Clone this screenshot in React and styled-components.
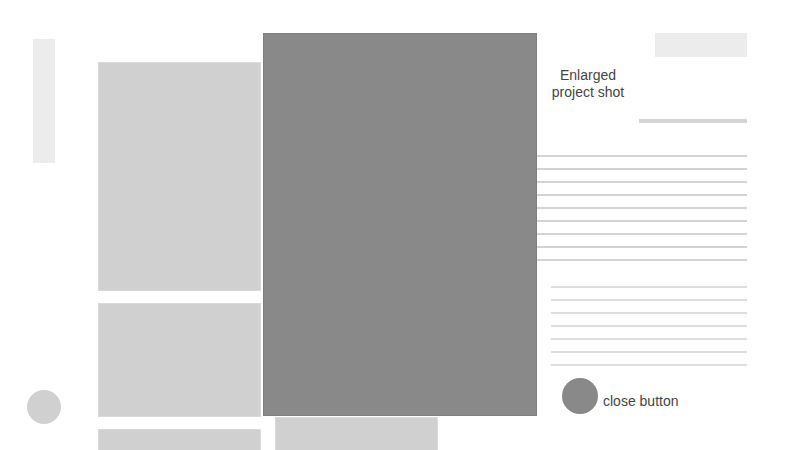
import React from 'react'
import styled, { createGlobalStyle } from 'styled-components'

const GlobalStyle = createGlobalStyle`
html, body {
  margin: 0;
  padding: 0;
  background: #ffffff;
  overflow: hidden;
}
`

const Page = styled.div`
position: relative;
width: 800px;
height: 450px;
display: flex;
overflow: hidden;
font-family: "Liberation Sans", Arial, sans-serif;
`

const Sidebar = styled.div`
width: 98px;
box-sizing: border-box;
padding: 39px 0 26px 27px;
display: flex;
flex-direction: column;
justify-content: space-between;
align-items: flex-start;
`

const SideBar = styled.div`
width: 22px;
height: 124px;
margin-left: 6px;
background: #ececec;
`

const SideDot = styled.div`
width: 34px;
height: 34px;
border-radius: 50%;
background: #d0d0d0;
`

const Grid = styled.div`
padding-top: 62px;
display: grid;
grid-template-columns: 163px 163px;
column-gap: 14px;
align-items: start;
`

const Column = styled.div`
display: flex;
flex-direction: column;
gap: 12px;
`

const Card = styled.div`
height: ${p => p.h}px;
box-sizing: border-box;
background: #d0d0d0;
border: 1px solid #dadada;
`

const Modal = styled.div`
position: absolute;
left: 263px;
top: 33px;
width: 484px;
height: 383px;
display: flex;
background: #ffffff;
`

const Shot = styled.div`
width: 274px;
height: 100%;
box-sizing: border-box;
background: #898989;
border: 1px solid #7f7f7f;
`

const Info = styled.div`
flex: 1;
display: flex;
flex-direction: column;
`

const Header = styled.div`
display: flex;
justify-content: flex-end;
`

const HeaderBlock = styled.div`
width: 92px;
height: 24px;
background: #ececec;
`

const Caption = styled.div`
width: 102px;
margin-top: 10px;
text-align: center;
font-size: 14px;
line-height: 17px;
color: #444444;
`

const TitleBar = styled.div`
align-self: flex-end;
width: 108px;
height: 4px;
margin-top: 18px;
background: #d4d4d4;
`

const Lines = styled.div`
display: flex;
flex-direction: column;
gap: 11px;
margin-top: ${p => p.top}px;
padding-left: ${p => p.indent || 0}px;
`

const Line = styled.div`
height: 2px;
background: ${p => p.light ? '#dedede' : '#d3d3d3'};
`

const CloseRow = styled.div`
display: flex;
align-items: flex-start;
gap: 5px;
margin-top: 12px;
padding-left: 25px;
`

const CloseButton = styled.div`
width: 36px;
height: 36px;
border-radius: 50%;
background: #898989;
`

const CloseLabel = styled.span`
padding-top: 15px;
font-size: 14px;
line-height: 17px;
color: #444444;
`

export default function App() {
  return (
    <Page>
      <GlobalStyle />
      <Sidebar>
        <SideBar />
        <SideDot />
      </Sidebar>
      <Grid>
        <Column>
          <Card h={229} />
          <Card h={114} />
          <Card h={120} />
        </Column>
        <Column>
          <Card h={343} />
          <Card h={120} />
        </Column>
      </Grid>
      <Modal>
        <Shot />
        <Info>
          <Header>
            <HeaderBlock />
          </Header>
          <Caption>Enlarged<br />project shot</Caption>
          <TitleBar />
          <Lines top={32}>
            {Array.from({ length: 9 }).map((_, i) => <Line key={i} />)}
          </Lines>
          <Lines top={25} indent={14}>
            {Array.from({ length: 7 }).map((_, i) => <Line key={i} light />)}
          </Lines>
          <CloseRow>
            <CloseButton />
            <CloseLabel>close button</CloseLabel>
          </CloseRow>
        </Info>
      </Modal>
    </Page>
  )
}
